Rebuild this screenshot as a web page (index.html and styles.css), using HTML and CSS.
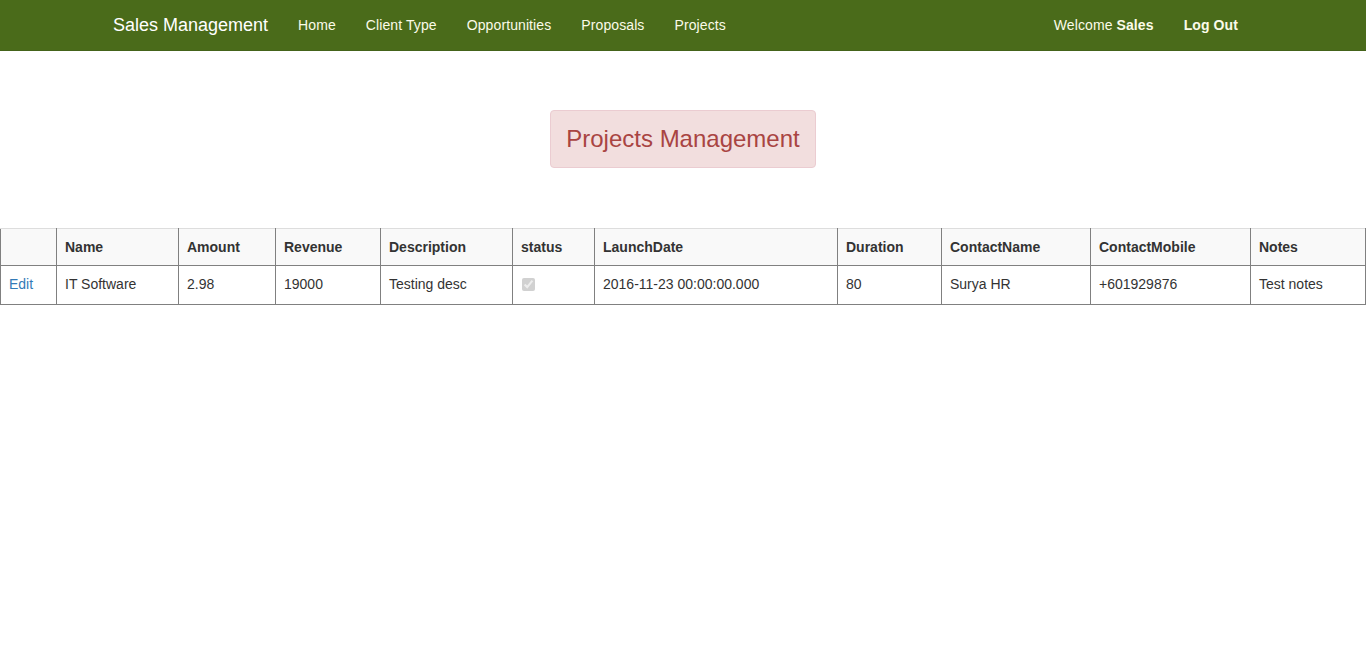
FILE: index.html
```
<!DOCTYPE html>
<html>
<head>
<meta charset="utf-8">
<title>Projects Management</title>
<link rel="stylesheet" href="styles.css">
</head>
<body>
<nav class="navbar">
  <div class="container">
    <a class="brand" href="#">Sales Management</a>
    <ul class="nav">
      <li><a href="#">Home</a></li>
      <li><a href="#">Client Type</a></li>
      <li><a href="#">Opportunities</a></li>
      <li><a href="#">Proposals</a></li>
      <li><a href="#">Projects</a></li>
    </ul>
    <ul class="nav nav-right">
      <li><span class="nav-text">Welcome <b>Sales</b></span></li>
      <li><a href="#" class="strong">Log Out</a></li>
    </ul>
  </div>
</nav>
<main class="content">
  <div class="title-wrap">
    <h3 class="alert">Projects Management</h3>
  </div>
  <table class="grid">
    <colgroup>
      <col class="c-edit"><col class="c-name"><col class="c-amount"><col class="c-revenue"><col class="c-desc"><col class="c-status"><col class="c-launch"><col class="c-duration"><col class="c-cname"><col class="c-cmobile"><col class="c-notes">
    </colgroup>
    <tr class="head">
      <th>&nbsp;</th><th>Name</th><th>Amount</th><th>Revenue</th><th>Description</th><th>status</th><th>LaunchDate</th><th>Duration</th><th>ContactName</th><th>ContactMobile</th><th>Notes</th>
    </tr>
    <tr>
      <td><a href="#" class="edit">Edit</a></td><td>IT Software</td><td>2.98</td><td>19000</td><td>Testing desc</td><td><input type="checkbox" checked disabled class="chk"></td><td>2016-11-23 00:00:00.000</td><td>80</td><td>Surya HR</td><td>+601929876</td><td>Test notes</td>
    </tr>
  </table>
</main>
</body>
</html>
```
FILE: styles.css
```
* { box-sizing: border-box; }
html, body { margin: 0; padding: 0; }
body {
  font-family: "Liberation Sans", Arial, sans-serif;
  font-size: 14px;
  line-height: 1.42857;
  color: #333;
  background: #fff;
}
a { text-decoration: none; }
.navbar {
  background: #4a6b1a;
  border-bottom: 1px solid #44631a;
  height: 51px;
}
.container {
  width: 1170px;
  margin: 0 auto;
  padding: 0 15px;
  display: flex;
  align-items: flex-start;
}
.brand {
  font-size: 18px;
  line-height: 20px;
  padding: 15px 15px;
  margin-left: -15px;
  color: #fff;
}
.nav {
  list-style: none;
  margin: 0;
  padding: 0;
  display: flex;
}
.nav a, .nav-text {
  display: block;
  padding: 15px 15px;
  line-height: 20px;
  color: #fbfbe9;
  letter-spacing: 0.1px;
}
.nav-right { margin-left: auto; }
.strong { font-weight: bold; }
.content { padding-top: 59px; }
.title-wrap { display: flex; justify-content: center; }
.alert {
  margin: 0;
  font-size: 24px;
  font-weight: normal;
  line-height: 1.1;
  padding: 15px 15px;
  background: #f2dede;
  border: 1px solid #ebccd1;
  border-radius: 4px;
  color: #a94442;
}
.grid {
  margin-top: 60px;
  width: 100%;
  border-collapse: collapse;
  table-layout: fixed;
}
.c-edit { width: 56px; }
.c-name { width: 122px; }
.c-amount { width: 97px; }
.c-revenue { width: 105px; }
.c-desc { width: 132px; }
.c-status { width: 82px; }
.c-launch { width: 243px; }
.c-duration { width: 104px; }
.c-cname { width: 149px; }
.c-cmobile { width: 160px; }
.c-notes { width: 115px; }
.grid th, .grid td {
  padding: 8px;
  line-height: 20px;
  text-align: left;
  vertical-align: top;
  border: 1px solid #808080;
}
.grid th { border-top-color: #ddd; background: #f9f9f9; font-weight: bold; }
.grid td { padding-top: 8px; padding-bottom: 10px; }
.edit { color: #337ab7; }
.chk { display: block; margin: 4px 0 3px 1px; width: 13px; height: 13px; }
```
